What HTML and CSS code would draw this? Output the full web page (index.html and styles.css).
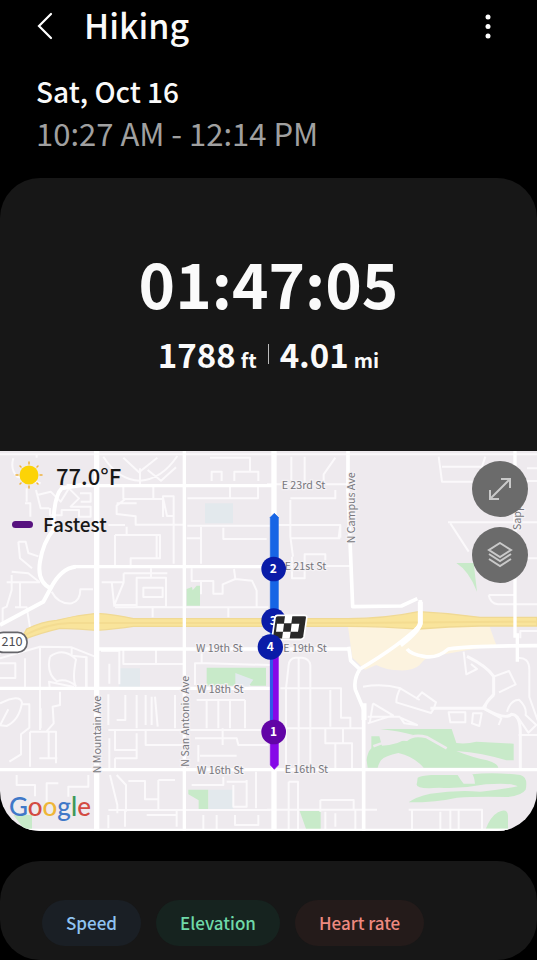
FILE: index.html
```html
<!DOCTYPE html>
<html lang="en">
<head>
<meta charset="utf-8">
<meta name="viewport" content="width=device-width, initial-scale=1">
<title>Hiking</title>
<link rel="stylesheet" href="styles.css">
</head>
<body>
<header class="top">
  <div class="bar">
    <button class="icon-btn" aria-label="Back"><svg width="18" height="30" viewBox="0 0 18 30"><path d="M15 2 3 14 15 26" fill="none" stroke="#fff" stroke-width="2.200" stroke-linecap="round"/></svg></button>
    <h1>Hiking</h1>
    <button class="icon-btn more" aria-label="More options"><svg width="8" height="26" viewBox="0 0 8 26" fill="#fff"><circle cx="4" cy="3" r="2.500"/><circle cx="4" cy="12.500" r="2.500"/><circle cx="4" cy="22" r="2.500"/></svg></button>
  </div>
  <p class="date">Sat, Oct 16</p>
  <p class="hours">10:27 AM - 12:14 PM</p>
</header>
<main>
  <section class="card">
    <div class="summary">
      <p class="duration">01:47:05</p>
      <p class="stats"><span class="stat">1788<small>ft</small></span><i class="rule"></i><span class="stat">4.01<small>mi</small></span></p>
    </div>
    <div class="map">
      <svg class="streets" viewBox="0 18 1611 1140" role="img" aria-label="Route map">
        <rect y="18" width="1611" height="1140" fill="#eeeaee"/>
        <!-- parks, water and shaded areas -->
        <g fill="#c8eac9">
          <path d="M560 432l16-6 2 10 12-14h10v60h-40zM620 668h178v54h-46l-16-18-14 8-8-6v16h-94zM565 1034h60v60h-29v-28l-31-18zM40 1110h56v45H75z"/>
          <path d="M1369 354h52l10 86q-24-62-62-86z"/>
          <g transform="translate(801 570)">
            <path d="M328 282h226l14 42q30 4 60-4l112 6v50h-22q-70-22-150-28 50 20 92 28 30 8 34 22H470q-30-34-76-44-40 8-52 22-6 8-10 22h-30l-3-22q2-24 14-36v-36h24l8 28q50-2 94-32-40-12-100-18z"/>
            <path d="M452 428q10-6 40-8h80q12 20 18 26h34q-2-20-8-28 60-8 144 2 24 6 16 44-12 18-56 22-90-2-150 2-60 14-145 14 20-16 65-26 80-12 150-6 60-6 112-16-20-12-96-6-70 14-140 10-76 6-66-14z"/>
            <path d="M98 528h63v56h-43zM655 584q16-40 38-52 28-14 30 10v42z"/>
          </g>
        </g>
        <path d="M1120 904q60-24 100-20 20-18 60-8l60 34" fill="none" stroke="#eeeaee" stroke-width="8"/>
        <g fill="#e3e9ed"><path d="M615 175h84v60h-84zM358 670h62v58h-62zM626 1034h74v62h-74zM706 684l54 20-16 22h-38z"/></g>
        <path d="M1044 545h425l15 42 5 13-170 30q-46 6-60 30-20 18-60 16-40 0-70-16l-34 14-38-36-10-72z" fill="#fcf3df"/>
        <!-- minor streets -->
        <g fill="none" stroke="#fbf9fb" stroke-width="6" stroke-linejoin="round">
          <path d="M0 28h1611M40 40q-10 34 12 55l70 20M110 38v-10M80 170v-40M75 175h16v40M108 135l14 55h26M112 150l40-10 30 30 25-40 30 30-25 25h60v30h-35v-20h-52v16h-35v-22M240 145h32v25h-30"/>
          <path d="M310 35q45 70 110 72 65-4 112-74M370 38l47 44 55-44M420 70v48M443 75l40 32 45-40M370 120v42h118M460 120v40M350 175h60M376 162l-26 20v25l57 7v25h143M489 216v-62h32v202M489 158l12 55h20M345 270h135v70h-88v30M345 270v95M380 245v25M470 270v70M325 240h50"/>
          <path d="M630 38h120v40M635 108V80h30v28M703 108V80h72v28M562 160h212v-40M690 120v40M562 242h250M603 246v110M670 248v34h130M560 280h40"/>
          <path d="M55 290h22l8 34 30 10M55 290l5 50 36 30M35 380l50 5 32 25M35 390v45l-15 50-12 5v48M20 412h100M60 412v75M45 487h35l10 60M155 440q20 38 60 35 26-6 26-42h38M305 412h66l-28 68h70M335 410l8 75M371 385v27M371 385h131M410 398h88v88h-88zM430 428h58v28h-58zM453 370v26M345 487h460M458 487v30M685 487v30"/>
          <path d="M575 370v38h65v38h30M668 446v-28l38-16-4-30M706 402l50 5 14 30v50M603 408v40"/>
          <path d="M0 640l120-35 95 2 70 28M120 605v250M0 655h46v44H0M215 607v25l45 5v90M258 640v90M150 735l-3-25 75 16M150 635q40-30 78 8-12 60 0 82M150 635q-12 48 20 74 28-10 58 14M75 640v90"/>
          <path d="M303 618h55v100M370 610v47h186M468 615v40M328 656v60M585 720v-65h35l190 5M605 625v30"/>
          <path d="M0 775q60-30 66-2-8 52-46 70l-20-2 25-48M68 778h20v70l-25 20v60l-35 22M90 860h78v95M90 860v105M122 790v60M180 740v40l-22 5 3 50-22 25M146 860v82M118 940h54"/>
          <path d="M325 748v92M350 825h26V750M410 750v100M437 750v90M455 755v85M465 755l8 90M325 855h490M328 880v90M345 855v60h65v-50M410 915v25h-65M345 940v35M437 855v45h118M525 750v100M590 765h145M620 765v85M655 765v85M690 765v85M735 765v85M585 880h125l5 20h90M595 900v50M600 932h110M668 850v50"/>
          <path d="M50 990v30h55v34M175 1015h-35v55M205 1055v-30h60v-35M330 990l22 90v25M350 990l28 30v80M385 1008h50v55h40v30M475 1005v60M475 1005h50M325 1095h485M325 1110v40M375 1095v50M440 1110h90M530 1095v50M575 1020h95v-25M700 1020v65h40v-80M740 1010h-60M768 980v110M610 1110v45M650 1110v45M705 1110v30h70v-30"/>
          <g transform="translate(801 0)"><path d="M0 118h240M73 35v70M113 35v85M205 38l-35 50v28M35 240h185v38M70 280h150M70 165v110l8 60M70 160h135v-25M75 335v65h38v-72h62v18M167 363h84M220 240l-5 38M515 35l10 75h90M525 65h120l10-30M543 232h268M550 235l55 85M750 108h61M665 450h80M665 450q5 26 28 28h118M750 340h61M760 580V558h51M780 70h31"/></g>
          <g transform="translate(801 570)"><path d="M130 90v315M95 70v335M65 90l-8 70v245M65 90q2-20 20-22h20q22 2 25 22M40 160h182v88h28v30M190 165v110M0 280h290M175 280v45h80v80M228 280v45M205 325v80M65 440h28v150M65 440v150M160 495h100v28M160 495v35M0 524h330M175 530v55M205 535v40M265 525v60"/>
          <path d="M288 155q60-10 112 5-12 22-12 42l104 32q10-12 15-32l-42-30-18 20M400 160l58 35M318 205l60 36-76 24M318 205l-10 60M400 248l50 22-38-5zM302 245h98M545 232h50v30h-45zM618 235h26l-7 38-22-8zM590 50l8 68 32-16-18-15M680 125l46-17 20 40-50 24M648 220l55 30-8 20M720 230q10-35 36-36 24 22 20 46l32 30-24 23-34-50M750 70q37-6 37 36v80l25 70M755 300h56M425 524h220v65M435 524v65M520 530v60M550 525v60M575 525v60M645 584h165"/>
          <path d="M490 220h158q14-24 32-42v-54q-20-30-80-60M680 180q-30 26-25 42 60 34 78 16 28 0 27 62v105" stroke-width="9"/></g>
        </g>
        <!-- freeway -->
        <path d="M60 590l20-38q45-22 90-26 60-16 120-21 60 4 110 16h644q110 0 212-21 90 4 184 17h171v26h-171q-94 2-184 9-100-7-212-8H400q-50 8-110 12-50-4-110-6-60 14-110 34z" fill="#f9e49b" stroke="#f0d993" stroke-width="4"/>
        <path d="M70 572q70-36 140-38h834l567-4" fill="none" stroke="#f4dc91" stroke-width="6"/>
        <!-- main roads -->
        <g fill="none" stroke="#fff" stroke-linejoin="round">
          <path d="M290 18v1140M822 18v1140" stroke-width="16"/>
          <path d="M553 18v1140M1545 18v560M1552 565v85M0 730h820M0 974h1611M200 122h620M220 365h601M290 612h756" stroke-width="10"/>
          <path d="M0 540l130-70 22-40q30-60 75-65M152 430q-42-20-32-80t40-95q0-100 25-125l60-10" stroke-width="12"/>
          <path d="M1044 18v120l14 347 146-2 48-22M1046 605l6 42 28 26M1261 465v75q-60 60-181 132-20 30-14 62l25 60v364M1221 612q12 16 50 22 40 8 74-22 66-10 266-10" stroke-width="11"/>
          <path d="M1261 470v65q-7 25-60 65M1092 775v50" stroke-width="15"/>
          <path d="M0 1154h1611" stroke-width="6"/>
        </g>
        <!-- labels -->
        <g class="labels">
          <text x="845" y="131">E 23rd St</text><text x="854" y="376">E 21st St</text><text x="588" y="621">W 19th St</text><text x="850" y="620">E 19th St</text><text x="591" y="743">W 18th St</text><text x="591" y="986">W 16th St</text><text x="854" y="985">E 16th St</text>
          <text transform="translate(304 985) rotate(-90)">N Mountain Ave</text><text transform="translate(567 965) rotate(-90)">N San Antonio Ave</text><text transform="translate(1064 295) rotate(-90)">N Campus Ave</text><text transform="translate(1562 255) rotate(-90)">Sapp</text>
        </g>
        <rect x="-18" y="562" width="99" height="60" rx="28" fill="#fff" stroke="#66666b" stroke-width="5"/>
        <text class="shield" x="36" y="604">210</text>
        <!-- route -->
        <path d="M811 600V217l12-12 12 12v383z" fill="#1765e5" stroke="#1765e5" stroke-width="2" stroke-linejoin="round"/>
        <path d="M811 590h24v370l-12 13-12-13z" fill="#8608e8" stroke="#8608e8" stroke-width="2" stroke-linejoin="round"/><path d="M810 610h9v235h-9z" fill="#3158e8"/>
        <g class="marks">
          <circle cx="821" cy="372" r="37"/><text x="820" y="384">2</text>
          <circle cx="821" cy="527" r="37"/><text x="820" y="540">3</text>
          <path d="M833 511h80q9 0 7 9l-8 55q-2 8-10 8h-77q-9 0-8-9l8-55q1-8 8-8z" fill="#292929" stroke="#fff" stroke-width="5"/>
          <path d="M855 513h22l-3 22h-22zM831 536h21l-3 24h-21zM875 536h23l-4 24h-22zM849 560h23l-3 21h-23z" fill="#fff"/>
          <circle cx="811" cy="606" r="38"/><text x="811" y="619">4</text>
          <circle class="fast" cx="821" cy="861" r="37"/><text x="821" y="874">1</text>
        </g>
      </svg>
      <div class="overlay">
        <div class="info">
          <p class="weather"><svg width="28" height="28" viewBox="0 0 28 28"><g stroke="#f0b23c" stroke-width="1.500" stroke-linecap="round"><path d="M14 1v2M14 25v2M1 14h2M25 14h2M5 5l1 1M22 22l1 1M5 23l1-1M22 6l1-1"/></g><circle cx="14" cy="14" r="9.500" fill="#fcd307"/></svg><span>77.0°F</span></p>
          <p class="legend"><i></i><span>Fastest</span></p>
          <p class="google"><span class="blue">G</span><span class="red">o</span><span class="yellow">o</span><span class="blue">g</span><span class="green">l</span><span class="red">e</span></p>
        </div>
        <div class="tools">
          <button aria-label="Expand map"><svg width="26" height="26" viewBox="0 0 26 26"><path d="M3 23 23 3M14 3h9v9M3 14v9h9"/></svg></button>
          <button aria-label="Map layers"><svg width="26" height="26" viewBox="0 0 26 26"><path d="M13 1 24 8 13 15 2 8zM2 12l11 7 11-7M2 17l11 7 11-7"/></svg></button>
        </div>
      </div>
    </div>
  </section>
  <section class="card chips">
    <button class="speed">Speed</button><button class="elevation">Elevation</button><button class="heart">Heart rate</button>
  </section>
</main>
</body>
</html>
```
FILE: styles.css
```css
* { box-sizing: border-box; }
body {
  margin: 0;
  background: #000;
  color: #fafafa;
  font-family: "Noto Sans CJK SC", "Noto Sans", sans-serif;
}
h1, p { margin: 0; }
button {
  border: 0;
  padding: 0;
  font: inherit;
  cursor: pointer;
}
svg { display: block; }
.top { padding: 0 36px 24px; }
.bar { display: flex; align-items: center; height: 54px; }
.icon-btn { background: none; }
.bar h1 {
  flex: 1;
  margin-left: 30px;
  padding-bottom: 4px;
  font-size: 34px;
  line-height: 50px;
  font-weight: 500;
}
.more { padding: 0 9px; }
.date { margin-top: 16px; font-size: 28px; line-height: 42px; font-weight: 500; }
.hours { font-size: 31px; line-height: 42px; color: #a0a0a0; }
.card {
  background: #171717;
  border-radius: 40px;
  overflow: hidden;
}
.summary {
  padding: 68px 0 75px;
  text-align: center;
  font-weight: 700;
}
.duration { font-size: 62px; line-height: 72px; }
.stats {
  display: flex;
  justify-content: center;
  align-items: center;
  height: 44px;
  margin-top: 14px;
  font-size: 33px;
  line-height: 44px;
}
.stat { display: flex; align-items: baseline; gap: 5px; }
.stats small { font-size: 20px; line-height: 24px; }
.rule { width: 1px; height: 20px; margin: 0 11px; background: #bbb; }
.map { position: relative; }
.streets { width: 100%; height: auto; }
.labels text {
  font-size: 32px;
  fill: #77777c;
  stroke: #f5f2f5;
  stroke-width: 7px;
  paint-order: stroke;
}
.shield { font-size: 38px; fill: #4d4d52; text-anchor: middle; }
.marks circle { fill: #0a1ca8; }
.marks .fast { fill: #6204a6; }
.marks text { fill: #fff; font-size: 36px; font-weight: 700; text-anchor: middle; }
.overlay {
  position: absolute;
  inset: 0;
  display: flex;
  justify-content: space-between;
  padding: 10px 9px 8px;
}
.info { display: flex; flex-direction: column; color: #171717; }
.weather, .legend { display: flex; align-items: center; }
.weather { gap: 13px; padding-left: 6px; font-size: 22px; line-height: 26px; font-weight: 500; }
.legend { gap: 10px; margin-top: 22px; padding-left: 3px; font-size: 19px; line-height: 26px; font-weight: 500; }
.legend i { width: 21px; height: 7px; border-radius: 4px; background: #57127f; }
.google { margin-top: auto; font-family: Lato, sans-serif; font-size: 26px; line-height: 34px; font-weight: 500; }
.blue { color: #4078c8; }
.red { color: #d34b43; }
.yellow { color: #efb637; }
.green { color: #3c9858; }
.tools { display: flex; flex-direction: column; gap: 10px; }
.tools button {
  display: grid;
  place-items: center;
  width: 56px;
  height: 56px;
  border-radius: 50%;
  background: #6b6b6b;
}
.tools path { fill: none; stroke: #c9c9c9; stroke-width: 2px; }
.chips {
  display: flex;
  gap: 15px;
  margin-top: 30px;
  padding: 39px 42px 14px;
}
.chips button { padding: 0 24px; border-radius: 23px; font-size: 17px; line-height: 46px; font-weight: 500; }
.speed { background: #1a1f25; color: #8fc3f2; }
.elevation { background: #16231f; color: #6fd9a8; }
.heart { background: #241b1a; color: #ee8a80; }
```
